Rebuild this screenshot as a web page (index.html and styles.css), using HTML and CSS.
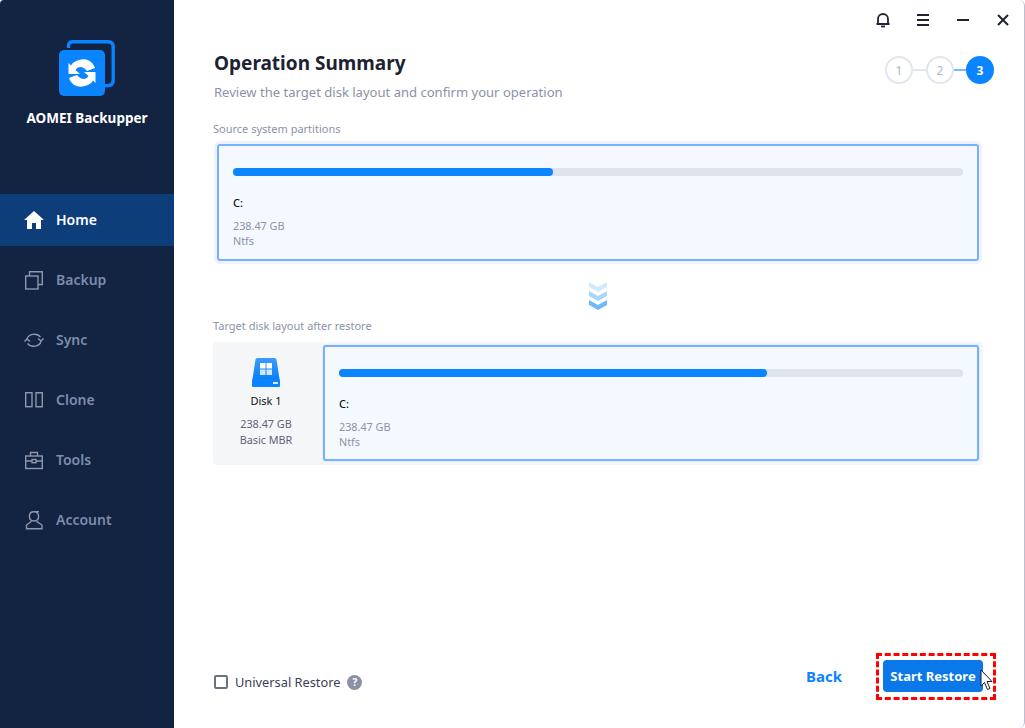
FILE: index.html
```html
<!DOCTYPE html>
<html lang="en">
<head>
<meta charset="utf-8">
<title>AOMEI Backupper</title>
<link rel="stylesheet" href="styles.css">
</head>
<body>
<div class="app">
  <aside class="sidebar">
    <div class="brand">
      <svg class="logo" width="58" height="58" viewBox="0 0 58 58">
        <path d="M9.5 8 V6 Q9.5 1.8 14 1.8 H49 Q54.2 1.8 54.2 7 V40 Q54.2 45.8 48 45.8 H46" fill="none" stroke="#0a84ff" stroke-width="3.4"/>
        <rect x="0" y="10" width="46" height="46" rx="5" fill="#0a84ff"/>
        <path d="M9.5 34 L21 34 L16.5 30 C19 26 24 26 28 31 L36 28 C33 20 26 18 20 20 C16 21 13 23 12 25.5 L9.5 23 Z" fill="#fff"/>
        <path d="M9.5 34 L21 34 L16.5 30 C19 26 24 26 28 31 L36 28 C33 20 26 18 20 20 C16 21 13 23 12 25.5 L9.5 23 Z" fill="#fff" transform="rotate(180 23 33)"/>
      </svg>
      <div class="brand-name">AOMEI Backupper</div>
    </div>
    <nav class="nav">
      <a class="nav-item active">
        <svg class="nav-icon" viewBox="0 0 20 20"><path d="M10 1 L20 10 H17 V19 H12 V13 H8 V19 H3 V10 H0 Z" fill="#fff"/></svg>
        <span>Home</span>
      </a>
      <a class="nav-item">
        <svg class="nav-icon" viewBox="0 0 20 20"><g class="line"><rect x="1.7" y="6" width="12.3" height="13"/><path d="M5.5 6 V1.7 H18.3 V14.5 H14"/></g></svg>
        <span>Backup</span>
      </a>
      <a class="nav-item">
        <svg class="nav-icon" viewBox="0 0 20 20"><g class="line"><path d="M3 9 A7.5 6.2 0 0 1 16.5 7"/><path d="M17 11.5 A7.5 6.2 0 0 1 3.5 13.5"/><path d="M14 8.5 L17 11 L19.5 8.5"/><path d="M0.5 11.5 L3 9 L6 11.5"/></g></svg>
        <span>Sync</span>
      </a>
      <a class="nav-item">
        <svg class="nav-icon" viewBox="0 0 20 20"><g class="line"><rect x="1.7" y="2.7" width="6.3" height="14"/><path d="M12 2.7 H18.3 V16.7 H12 Z"/></g></svg>
        <span>Clone</span>
      </a>
      <a class="nav-item">
        <svg class="nav-icon" viewBox="0 0 20 20"><g class="line"><rect x="1.7" y="6" width="16.6" height="12.5"/><path d="M6.5 6 V2.5 H13.5 V6"/><path d="M1.7 11 H8 M12 11 H18.3"/><rect x="8" y="9.5" width="4" height="3.2"/></g></svg>
        <span>Tools</span>
      </a>
      <a class="nav-item">
        <svg class="nav-icon" viewBox="0 0 20 20"><g class="line"><path d="M10 1.7 A4.6 4.6 0 0 1 14.6 6.3 C14.6 9 12.8 11 10 11 C7.2 11 5.4 9 5.4 6.3 C5.4 3.5 7.2 1.7 10 1.7 H15"/><path d="M7.5 11.3 L2.5 15 V18.7 H18 V15 L12.5 11.3"/></g></svg>
        <span>Account</span>
      </a>
    </nav>
  </aside>

  <main class="main">
    <header class="titlebar">
      <svg class="tb-icon" viewBox="0 0 16 16"><path d="M3 12 V7 A5 5 0 0 1 13 7 V12 M1.5 12 H14.5" fill="none" stroke="#1f2430" stroke-width="1.8"/><path d="M6 14.5 H10" stroke="#1f2430" stroke-width="1.8"/></svg>
      <svg class="tb-icon" viewBox="0 0 16 16"><path d="M2 3 H14 M2 8 H14 M2 13 H14" stroke="#1f2430" stroke-width="2"/></svg>
      <svg class="tb-icon" viewBox="0 0 16 16"><path d="M2 8 H14" stroke="#1f2430" stroke-width="2"/></svg>
      <svg class="tb-icon" viewBox="0 0 16 16"><path d="M3 3 L13 13 M13 3 L3 13" stroke="#1f2430" stroke-width="2"/></svg>
    </header>

    <div class="heading-row">
      <div>
        <h1 class="title">Operation Summary</h1>
        <p class="subtitle">Review the target disk layout and confirm your operation</p>
      </div>
      <ol class="steps">
        <li class="step">1</li>
        <li class="step-link"></li>
        <li class="step">2</li>
        <li class="step-link to-current"></li>
        <li class="step current">3</li>
      </ol>
    </div>

    <div class="section-label">Source system partitions</div>
    <section class="partition source">
      <div class="bar"><div class="bar-fill" style="width:320px"></div></div>
      <div class="drive">C:</div>
      <div class="meta">238.47 GB</div>
      <div class="meta">Ntfs</div>
    </section>

    <svg class="chevrons" width="20" height="30" viewBox="0 0 20 30">
      <path d="M1 1 L10 6 L19 1 V6 L10 11 L1 6 Z" fill="#d3e9ff"/>
      <path d="M1 10 L10 15 L19 10 V15 L10 20 L1 15 Z" fill="#a9d5ff"/>
      <path d="M1 19 L10 24 L19 19 V24 L10 29 L1 24 Z" fill="#6db8ff"/>
    </svg>

    <div class="section-label target-label">Target disk layout after restore</div>
    <section class="disk-row">
      <div class="disk-info">
        <svg class="disk-icon" width="30" height="32" viewBox="0 0 30 32">
          <defs><linearGradient id="diskGrad" x1="0" y1="0" x2="0" y2="1"><stop offset="0" stop-color="#3d9bff"/><stop offset="1" stop-color="#0a7ff5"/></linearGradient></defs>
          <path d="M4.5 1.5 Q4.7 0 6.5 0 H23.5 Q25.3 0 25.5 1.5 L28.5 21 H1.5 Z" fill="url(#diskGrad)"/>
          <rect x="1" y="21" width="28" height="8" rx="1" fill="#0a84ff"/>
          <rect x="9" y="5" width="5.5" height="5.5" fill="#fff"/>
          <rect x="15.5" y="5" width="5.5" height="5.5" fill="#fff"/>
          <rect x="9" y="11.5" width="5.5" height="5.5" fill="#cfe6ff"/>
          <rect x="15.5" y="11.5" width="5.5" height="5.5" fill="#cfe6ff"/>
          <rect x="22" y="24" width="5" height="2" fill="#d6ebff"/>
        </svg>
        <div class="disk-name">Disk 1</div>
        <div class="disk-meta">238.47 GB</div>
        <div class="disk-meta">Basic MBR</div>
      </div>
      <div class="partition target">
        <div class="bar"><div class="bar-fill" style="width:428px"></div></div>
        <div class="drive">C:</div>
        <div class="meta">238.47 GB</div>
        <div class="meta">Ntfs</div>
      </div>
    </section>

    <footer class="footer">
      <label class="universal">
        <span class="checkbox"></span>
        <span class="universal-text">Universal Restore</span>
        <span class="help">?</span>
      </label>
      <div class="actions">
        <a class="back">Back</a>
        <div class="start-wrap">
          <button class="start">Start Restore</button>
          <svg class="cursor" width="13" height="22" viewBox="0 0 13 22"><path d="M1 1 V17 L4.5 13.5 L7.5 20.5 L10 19.5 L7 12.5 L12 12.5 Z" fill="#fff" stroke="#1a1f33" stroke-width="1"/></svg>
        </div>
      </div>
    </footer>
  </main>
</div>
</body>
</html>
```

FILE: styles.css
```css
* { box-sizing: border-box; }
html, body { margin: 0; padding: 0; }
body {
  width: 1025px;
  height: 728px;
  overflow: hidden;
  font-family: "Noto Sans", "Open Sans", sans-serif;
  background: #fff;
}
.app { display: flex; width: 1025px; height: 728px; }

.sidebar {
  width: 174px;
  flex: none;
  background: #132342;
  border-top-left-radius: 4px;
  display: flex;
  flex-direction: column;
}
.brand {
  height: 194px;
  padding-top: 40px;
  display: flex;
  flex-direction: column;
  align-items: center;
}
.logo { margin-left: 2px; }
.brand-name {
  margin-top: 11px;
  color: #fff;
  font-size: 13.5px;
  font-weight: 700;
  line-height: 18px;
}
.nav { display: flex; flex-direction: column; gap: 8px; }
.nav-item {
  height: 52px;
  padding: 0 0 2px 24px;
  display: flex;
  align-items: center;
  gap: 12px;
  color: #7d8cac;
  font-size: 14px;
  font-weight: 600;
}
.nav-item.active { background: #0e3e7a; color: #fff; }
.nav-icon { width: 20px; height: 20px; flex: none; margin-top: 2px; }
.line { fill: none; stroke: #8e97ac; stroke-width: 1.4; }

.main {
  flex: 1;
  min-width: 0;
  padding: 0 41px 0 39px;
  border-right: 1px solid #b9c0d4;
  border-top-right-radius: 6px;
  border-bottom-right-radius: 6px;
  display: flex;
  flex-direction: column;
}
.titlebar {
  height: 40px;
  margin-right: -28px;
  display: flex;
  justify-content: flex-end;
  align-items: center;
  gap: 24px;
}
.tb-icon { width: 16px; height: 16px; }

.heading-row {
  display: flex;
  justify-content: space-between;
  align-items: flex-start;
  margin-right: -11px;
}
.title {
  margin: 9px 0 0 1px;
  font-size: 19px;
  font-weight: 700;
  line-height: 28px;
  color: #1d2233;
}
.subtitle {
  margin: 6px 0 0 1px;
  font-size: 13.05px;
  line-height: 18px;
  color: #8b92a8;
}
.steps {
  list-style: none;
  margin: 16px 0 0;
  padding: 0;
  display: flex;
  align-items: center;
}
.step {
  width: 28px;
  height: 28px;
  border-radius: 50%;
  border: 2px solid #e1e6ef;
  display: flex;
  align-items: center;
  justify-content: center;
  font-size: 12px;
  color: #aeb6cb;
}
.step.current { background: #0a84ff; border-color: #0a84ff; color: #fff; font-weight: 700; }
.step-link { width: 13px; height: 2px; background: #e1e6ef; }
.step-link.to-current { width: 12px; background: #7ab8ff; }

.section-label {
  margin-top: 19px;
  height: 18px;
  font-size: 11px;
  line-height: 18px;
  color: #8b92a8;
}
.partition {
  background: #f3f9ff;
  border: 2px solid #74b2ff;
  border-radius: 3px;
  box-shadow: 0 0 0 3px #f0f2f7;
  padding: 22px 14px 0;
}
.source {
  margin: 6px 4px 0;
  height: 117px;
}
.bar { height: 8px; background: #dfe3ec; border-radius: 4px; }
.bar-fill { height: 8px; background: #0a84ff; border-radius: 4px; }
.drive {
  margin-top: 18px;
  font-size: 11px;
  line-height: 18px;
  font-weight: 500;
  color: #111;
}
.meta {
  font-size: 10.8px;
  line-height: 15px;
  color: #8b92a8;
}
.drive + .meta { margin-top: 6px; }

.chevrons { display: block; margin: 20px 0 0 375px; }
.target-label { margin-top: 6px; }
.disk-row {
  margin-top: 7px;
  height: 123px;
  background: #f5f6f8;
  border-radius: 4px;
  display: flex;
  padding: 3px 4px 4px 0;
}
.disk-info {
  width: 110px;
  flex: none;
  display: flex;
  flex-direction: column;
  align-items: center;
  padding: 13px 4px 0 0;
}
.disk-name { margin-top: 3px; font-size: 11px; line-height: 16px; color: #111; }
.disk-meta { font-size: 10.8px; line-height: 16px; color: #5d6478; }
.disk-name + .disk-meta { margin-top: 7px; }
.target { flex: 1; min-width: 0; box-shadow: 0 0 0 1px #e6ebf4; }

.footer {
  margin-top: auto;
  height: 76px;
  padding-bottom: 36px;
  display: flex;
  justify-content: space-between;
  align-items: flex-end;
}
.universal { display: flex; align-items: center; height: 20px; }
.checkbox {
  width: 14px;
  height: 14px;
  border: 2px solid #6b7186;
  border-radius: 2px;
  margin-left: 1px;
}
.universal-text { margin-left: 7px; font-size: 12.8px; color: #3a4158; }
.help {
  margin-left: 7px;
  width: 15px;
  height: 15px;
  border-radius: 50%;
  background: #8c92a4;
  color: #fff;
  font-size: 10px;
  font-weight: 700;
  display: flex;
  align-items: center;
  justify-content: center;
}
.actions { display: flex; align-items: center; gap: 41px; }
.back { font-size: 15px; font-weight: 700; color: #0a84ff; }
.start-wrap { position: relative; }
.start-wrap::before {
  content: "";
  position: absolute;
  left: -7px;
  right: -13px;
  top: -7px;
  bottom: -8px;
  border: 3px dashed #f00;
}
.start {
  display: block;
  width: 100px;
  height: 32px;
  padding: 0;
  border: none;
  border-radius: 4px;
  background: #0a78e8;
  color: #fff;
  font-family: inherit;
  font-size: 13px;
  font-weight: 700;
}
.cursor { position: absolute; left: 97px; top: 9px; }
```
